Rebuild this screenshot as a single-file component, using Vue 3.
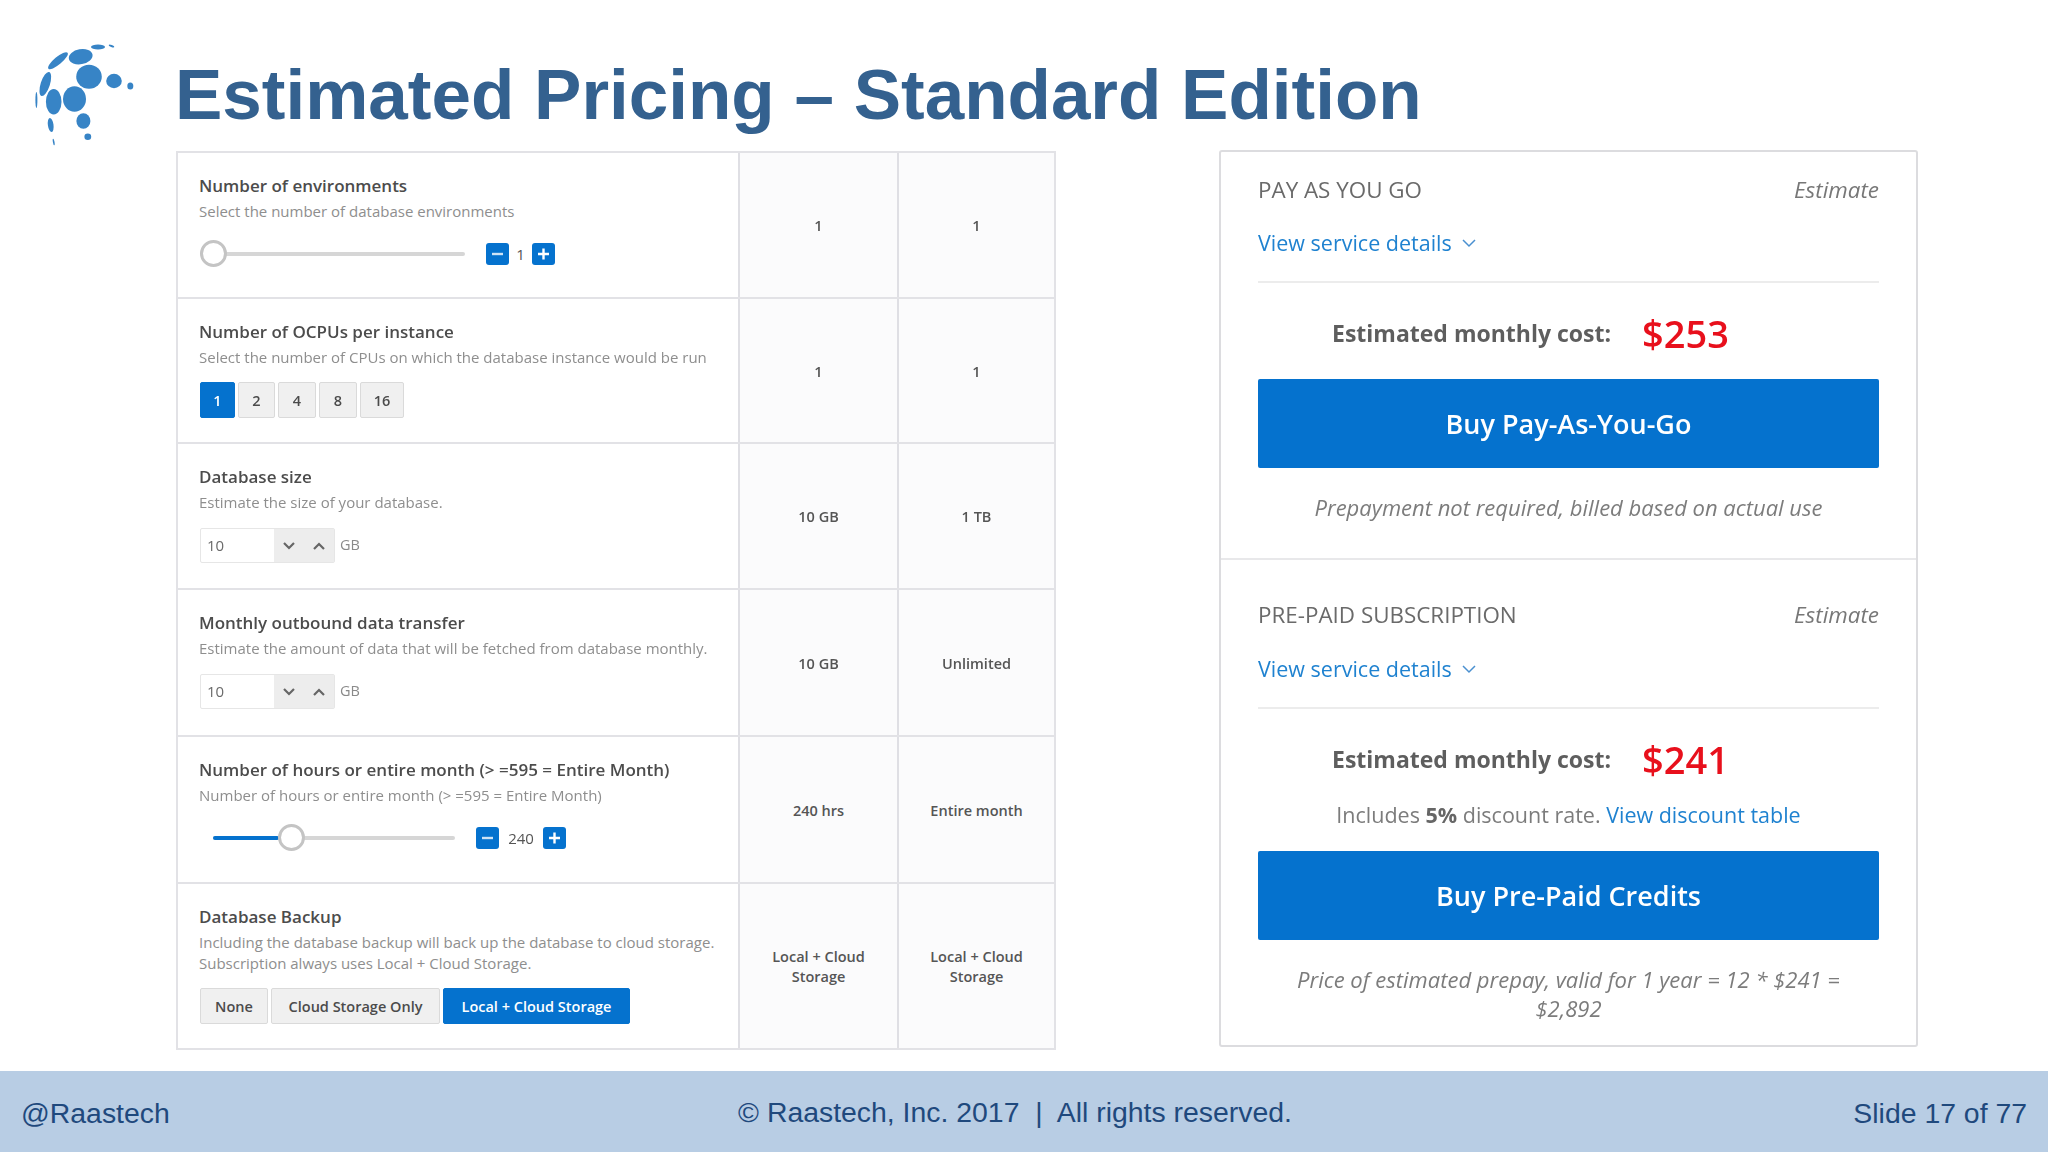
<script setup>
const logoDots = [
  { cx: 98, cy: 47, rx: 7, ry: 2.5, rot: 0 },
  { cx: 111.5, cy: 46, rx: 3, ry: 1, rot: 20 },
  { cx: 80.7, cy: 56.7, rx: 12, ry: 7.5, rot: -10 },
  { cx: 58, cy: 60.7, rx: 12.5, ry: 3.8, rot: -40 },
  { cx: 89, cy: 76.7, rx: 12.8, ry: 12, rot: 0 },
  { cx: 114, cy: 81, rx: 7.8, ry: 7.2, rot: 0 },
  { cx: 130.3, cy: 86, rx: 3, ry: 3.6, rot: 0 },
  { cx: 45.3, cy: 84, rx: 4.6, ry: 12.5, rot: 18 },
  { cx: 53.7, cy: 101.7, rx: 7.8, ry: 12.8, rot: 0 },
  { cx: 74.5, cy: 99, rx: 11.5, ry: 12.8, rot: 0 },
  { cx: 83.4, cy: 121, rx: 7, ry: 7.8, rot: 0 },
  { cx: 50.7, cy: 125, rx: 2.8, ry: 7, rot: -8 },
  { cx: 87.8, cy: 136.7, rx: 3.4, ry: 3.2, rot: 0 },
  { cx: 36.4, cy: 100, rx: 1, ry: 8, rot: 0 },
  { cx: 53.7, cy: 142, rx: 0.8, ry: 3.4, rot: -10 },
]

const rows = [
  {
    title: 'Number of environments',
    sub: ['Select the number of database environments'],
    control: 'slider',
    trackWidth: 265,
    fill: 0,
    knobAt: 0,
    value: '1',
    valueWidth: 24,
    sliderInset: 0,
    gap: 21,
    a: '1',
    b: '1',
    height: 146,
  },
  {
    title: 'Number of OCPUs per instance',
    sub: ['Select the number of CPUs on which the database instance would be run'],
    control: 'buttons',
    buttons: [
      { label: '1', width: 35, on: true },
      { label: '2', width: 37 },
      { label: '4', width: 38 },
      { label: '8', width: 38 },
      { label: '16', width: 44 },
    ],
    a: '1',
    b: '1',
    height: 145,
  },
  {
    title: 'Database size',
    sub: ['Estimate the size of your database.'],
    control: 'spinner',
    a: '10 GB',
    b: '1 TB',
    height: 146,
  },
  {
    title: 'Monthly outbound data transfer',
    sub: ['Estimate the amount of data that will be fetched from database monthly.'],
    control: 'spinner',
    a: '10 GB',
    b: 'Unlimited',
    height: 147,
  },
  {
    title: 'Number of hours or entire month (> =595 = Entire Month)',
    sub: ['Number of hours or entire month (> =595 = Entire Month)'],
    control: 'slider',
    trackWidth: 242,
    fill: 66,
    knobAt: 65,
    value: '240',
    valueWidth: 45,
    sliderInset: 13,
    gap: 21,
    a: '240 hrs',
    b: 'Entire month',
    height: 147,
  },
  {
    title: 'Database Backup',
    sub: [
      'Including the database backup will back up the database to cloud storage.',
      'Subscription always uses Local + Cloud Storage.',
    ],
    control: 'buttons',
    wide: true,
    buttons: [
      { label: 'None', width: 68 },
      { label: 'Cloud Storage Only', width: 169 },
      { label: 'Local + Cloud Storage', width: 187, on: true },
    ],
    a: 'Local + Cloud Storage',
    b: 'Local + Cloud Storage',
    height: 166,
  },
]
</script>

<template>
  <div class="slide">
    <header class="head">
      <svg class="logo" viewBox="0 0 175 151" width="175" height="151">
        <ellipse
          v-for="(d, i) in logoDots"
          :key="i"
          :cx="d.cx"
          :cy="d.cy"
          :rx="d.rx"
          :ry="d.ry"
          :transform="`rotate(${d.rot} ${d.cx} ${d.cy})`"
          fill="#3784c6"
        />
      </svg>
      <h1 class="title">Estimated Pricing – Standard Edition</h1>
    </header>

    <main class="body">
      <section class="table">
        <div
          v-for="row in rows"
          :key="row.title"
          class="row"
          :style="{ height: row.height + 'px' }"
        >
          <div class="cell-main">
            <div class="label">{{ row.title }}</div>
            <div class="desc">
              <div v-for="line in row.sub" :key="line">{{ line }}</div>
            </div>

            <div v-if="row.control === 'slider'" class="slider-row">
              <div
                class="slider"
                :style="{ width: row.trackWidth + 'px', marginLeft: row.sliderInset + 'px', marginRight: row.gap + 'px' }"
              >
                <div class="track-fill" :style="{ width: row.fill + 'px' }"></div>
                <div class="knob" :style="{ left: row.knobAt + 'px' }"></div>
              </div>
              <button class="step">
                <svg viewBox="0 0 23 22" width="23" height="22"><path d="M6 11h11" stroke="#cfe3f5" stroke-width="2.4" /></svg>
              </button>
              <span class="step-value" :style="{ width: row.valueWidth - 1 + 'px' }">{{ row.value }}</span>
              <button class="step">
                <svg viewBox="0 0 23 22" width="23" height="22"><path d="M6 11h11M11.5 5.5v11" stroke="#fff" stroke-width="2.4" /></svg>
              </button>
            </div>

            <div v-else-if="row.control === 'buttons'" class="btn-group" :class="{ wide: row.wide }">
              <button
                v-for="b in row.buttons"
                :key="b.label"
                class="seg"
                :class="{ on: b.on }"
                :style="{ width: b.width + 'px' }"
              >
                {{ b.label }}
              </button>
            </div>

            <div v-else class="spin-row">
              <div class="spinner">
                <span class="spin-input">10</span>
                <span class="spin-btn">
                  <svg viewBox="0 0 16 10" width="16" height="10"><path d="M3 2l5 5 5-5" fill="none" stroke="#666" stroke-width="2.2" /></svg>
                </span>
                <span class="spin-btn">
                  <svg viewBox="0 0 16 10" width="16" height="10"><path d="M3 8l5-5 5 5" fill="none" stroke="#666" stroke-width="2.2" /></svg>
                </span>
              </div>
              <span class="unit">GB</span>
            </div>
          </div>
          <div class="cell-val">{{ row.a }}</div>
          <div class="cell-val">{{ row.b }}</div>
        </div>
      </section>

      <aside class="card">
        <div class="plan plan-first">
          <div class="plan-top">
            <span class="plan-name">PAY AS YOU GO</span>
            <em class="plan-tag">Estimate</em>
          </div>
          <a class="details">
            View service details
            <svg viewBox="0 0 16 10" width="16" height="10"><path d="M2 2l6 6 6-6" fill="none" stroke="#4a90d0" stroke-width="1.5" /></svg>
          </a>
          <div class="cost">
            <span class="cost-label">Estimated monthly cost:</span>
            <span class="cost-value">$253</span>
          </div>
          <button class="buy">Buy Pay-As-You-Go</button>
          <p class="note">Prepayment not required, billed based on actual use</p>
        </div>

        <div class="plan plan-second">
          <div class="plan-top">
            <span class="plan-name">PRE-PAID SUBSCRIPTION</span>
            <em class="plan-tag">Estimate</em>
          </div>
          <a class="details">
            View service details
            <svg viewBox="0 0 16 10" width="16" height="10"><path d="M2 2l6 6 6-6" fill="none" stroke="#4a90d0" stroke-width="1.5" /></svg>
          </a>
          <div class="cost">
            <span class="cost-label">Estimated monthly cost:</span>
            <span class="cost-value">$241</span>
          </div>
          <div class="discount">Includes <b>5%</b> discount rate. <a>View discount table</a></div>
          <button class="buy">Buy Pre-Paid Credits</button>
          <p class="note">Price of estimated prepay, valid for 1 year = 12 * $241 =<br />$2,892</p>
        </div>
      </aside>
    </main>

    <footer class="foot">
      <span class="foot-side">@Raastech</span>
      <span class="foot-mid">© Raastech, Inc. 2017&nbsp; |&nbsp; All rights reserved.</span>
      <span class="foot-side foot-right">Slide 17 of 77</span>
    </footer>
  </div>
</template>

<style>
html,
body {
  margin: 0;
  background: #fff;
}
</style>

<style scoped>
.slide {
  width: 2048px;
  height: 1152px;
  display: flex;
  flex-direction: column;
  overflow: hidden;
  background: #fff;
  font-family: "Open Sans", "Noto Sans", sans-serif;
}

.head {
  height: 151px;
  display: flex;
  align-items: flex-start;
}

.logo {
  flex: none;
}

.title {
  margin: 0;
  padding-top: 53px;
  font-family: "Liberation Sans", Arial, sans-serif;
  font-size: 71px;
  line-height: 84px;
  font-weight: 700;
  color: #34618f;
  white-space: nowrap;
}

.body {
  flex: 1;
  display: flex;
  align-items: flex-start;
  padding-left: 176px;
}

/* the table and card are a blurry capture in the original slide */
.table {
  width: 880px;
  flex: none;
  border-top: 2px solid #e2e2e6;
  border-left: 2px solid #e2e2e6;
  border-right: 2px solid #e2e2e6;
  box-sizing: border-box;
  filter: blur(0.4px);
}

.row {
  display: grid;
  grid-template-columns: 560px 159px 1fr;
  border-bottom: 2px solid #e2e2e6;
  box-sizing: border-box;
}

.cell-main {
  padding: 23px 0 0 21px;
  background: #fff;
}

.cell-val {
  display: flex;
  align-items: center;
  justify-content: center;
  padding: 2px 24px 0;
  background: #fbfbfc;
  border-left: 2px solid #dfdfe4;
  font-size: 14.5px;
  line-height: 20px;
  font-weight: 600;
  color: #555;
  text-align: center;
}

.label {
  font-size: 17px;
  line-height: 20px;
  font-weight: 600;
  color: #4c4c4c;
  white-space: nowrap;
}

.desc {
  margin-top: 5px;
  font-size: 15px;
  line-height: 21px;
  color: #8e8e8e;
  white-space: nowrap;
}

.slider-row {
  margin: 19px 0 0 1px;
  height: 26px;
  display: flex;
  align-items: center;
}

.slider {
  position: relative;
  height: 4px;
  background: #d6d6d6;
  border-radius: 2px;
  flex: none;
}

.track-fill {
  height: 100%;
  background: #0572ce;
  border-radius: 2px;
}

.knob {
  position: absolute;
  top: -12px;
  width: 27px;
  height: 27px;
  box-sizing: border-box;
  border: 3px solid #c4c4c4;
  border-radius: 50%;
  background: #fff;
}

.step {
  width: 23px;
  height: 22px;
  padding: 0;
  border: 0;
  border-radius: 3px;
  background: #0572ce;
  display: flex;
  flex: none;
}

.step-value {
  flex: none;
  text-align: center;
  font-size: 15px;
  color: #555;
}

.btn-group {
  margin: 14px 0 0 1px;
  display: flex;
  gap: 3px;
}

.seg {
  height: 36px;
  padding: 0;
  box-sizing: border-box;
  border: 1px solid #dadada;
  border-radius: 2px;
  background: #f0f0f0;
  font-family: inherit;
  font-size: 14.5px;
  font-weight: 600;
  color: #4b4b4b;
  flex: none;
}

.seg.on {
  background: #0572ce;
  border-color: #0572ce;
  color: #fff;
}

.spin-row {
  margin: 15px 0 0 1px;
  display: flex;
  align-items: center;
  gap: 5px;
}

.spinner {
  width: 135px;
  height: 35px;
  display: flex;
  box-sizing: border-box;
  border: 1px solid #e6e6e6;
  border-radius: 2px;
}

.spin-input {
  width: 73px;
  padding-left: 6px;
  box-sizing: border-box;
  font-size: 15px;
  line-height: 33px;
  color: #6a6a6a;
}

.spin-btn {
  flex: 1;
  display: flex;
  align-items: center;
  justify-content: center;
  background: #ededed;
}

.unit {
  font-size: 14.5px;
  color: #8a8a8a;
  margin-top: -3px;
}

.card {
  width: 699px;
  height: 897px;
  flex: none;
  margin: -1px 0 0 163px;
  box-sizing: border-box;
  border: 2px solid #dcdcdf;
  border-radius: 3px;
  display: flex;
  flex-direction: column;
  filter: blur(0.4px);
}

.plan {
  padding: 0 37px;
  flex: 1;
}

.plan-first {
  flex: none;
  height: 408px;
  box-sizing: border-box;
  border-bottom: 2px solid #e8e8ea;
}

.plan-top {
  display: flex;
  justify-content: space-between;
  padding-top: 23px;
  line-height: 30px;
}

.plan-second .plan-top {
  padding-top: 40px;
}

.plan-name {
  font-size: 22.4px;
  color: #6a6a6a;
}

.plan-tag {
  font-size: 22.4px;
  color: #777;
}

.details {
  height: 78px;
  padding-top: 23px;
  box-sizing: border-box;
  display: flex;
  align-items: flex-start;
  gap: 9px;
  font-size: 21.5px;
  line-height: 30px;
  color: #1f82d0;
  border-bottom: 2px solid #ececec;
}

.plan-second .details {
  height: 79px;
  padding-top: 24px;
}

.details svg {
  margin-top: 10px;
}

.cost {
  height: 96px;
  padding: 4px 0 0 74px;
  box-sizing: border-box;
  display: flex;
  align-items: center;
  gap: 31px;
}

.cost-label {
  font-size: 23px;
  font-weight: 700;
  color: #5e5e5e;
}

.cost-value {
  font-size: 38px;
  font-weight: 600;
  color: #e8101c;
}

.buy {
  display: block;
  width: 100%;
  height: 89px;
  border: 0;
  border-radius: 2px;
  background: #0572ce;
  color: #fff;
  font-family: inherit;
  font-size: 27px;
  font-weight: 600;
}

.note {
  margin: 25px 0 0;
  text-align: center;
  font-size: 22px;
  font-style: italic;
  line-height: 29px;
  color: #7c7c7c;
}

.discount {
  height: 51px;
  margin-top: -5px;
  text-align: center;
  font-size: 21.5px;
  line-height: 30px;
  color: #7c7c7c;
}

.discount b {
  font-weight: 700;
  color: #666;
}

.discount a {
  color: #1f82d0;
}

.foot {
  height: 81px;
  flex: none;
  display: grid;
  grid-template-columns: 1fr auto 1fr;
  align-items: center;
  padding: 0 21px;
  background: #b8cde4;
  font-family: "Liberation Sans", Arial, sans-serif;
  font-size: 28.4px;
  color: #1f497d;
}

.foot-side {
  padding-top: 4px;
}

.foot-mid {
  padding-top: 2px;
  margin-right: 18px;
}

.foot-right {
  text-align: right;
}
</style>
